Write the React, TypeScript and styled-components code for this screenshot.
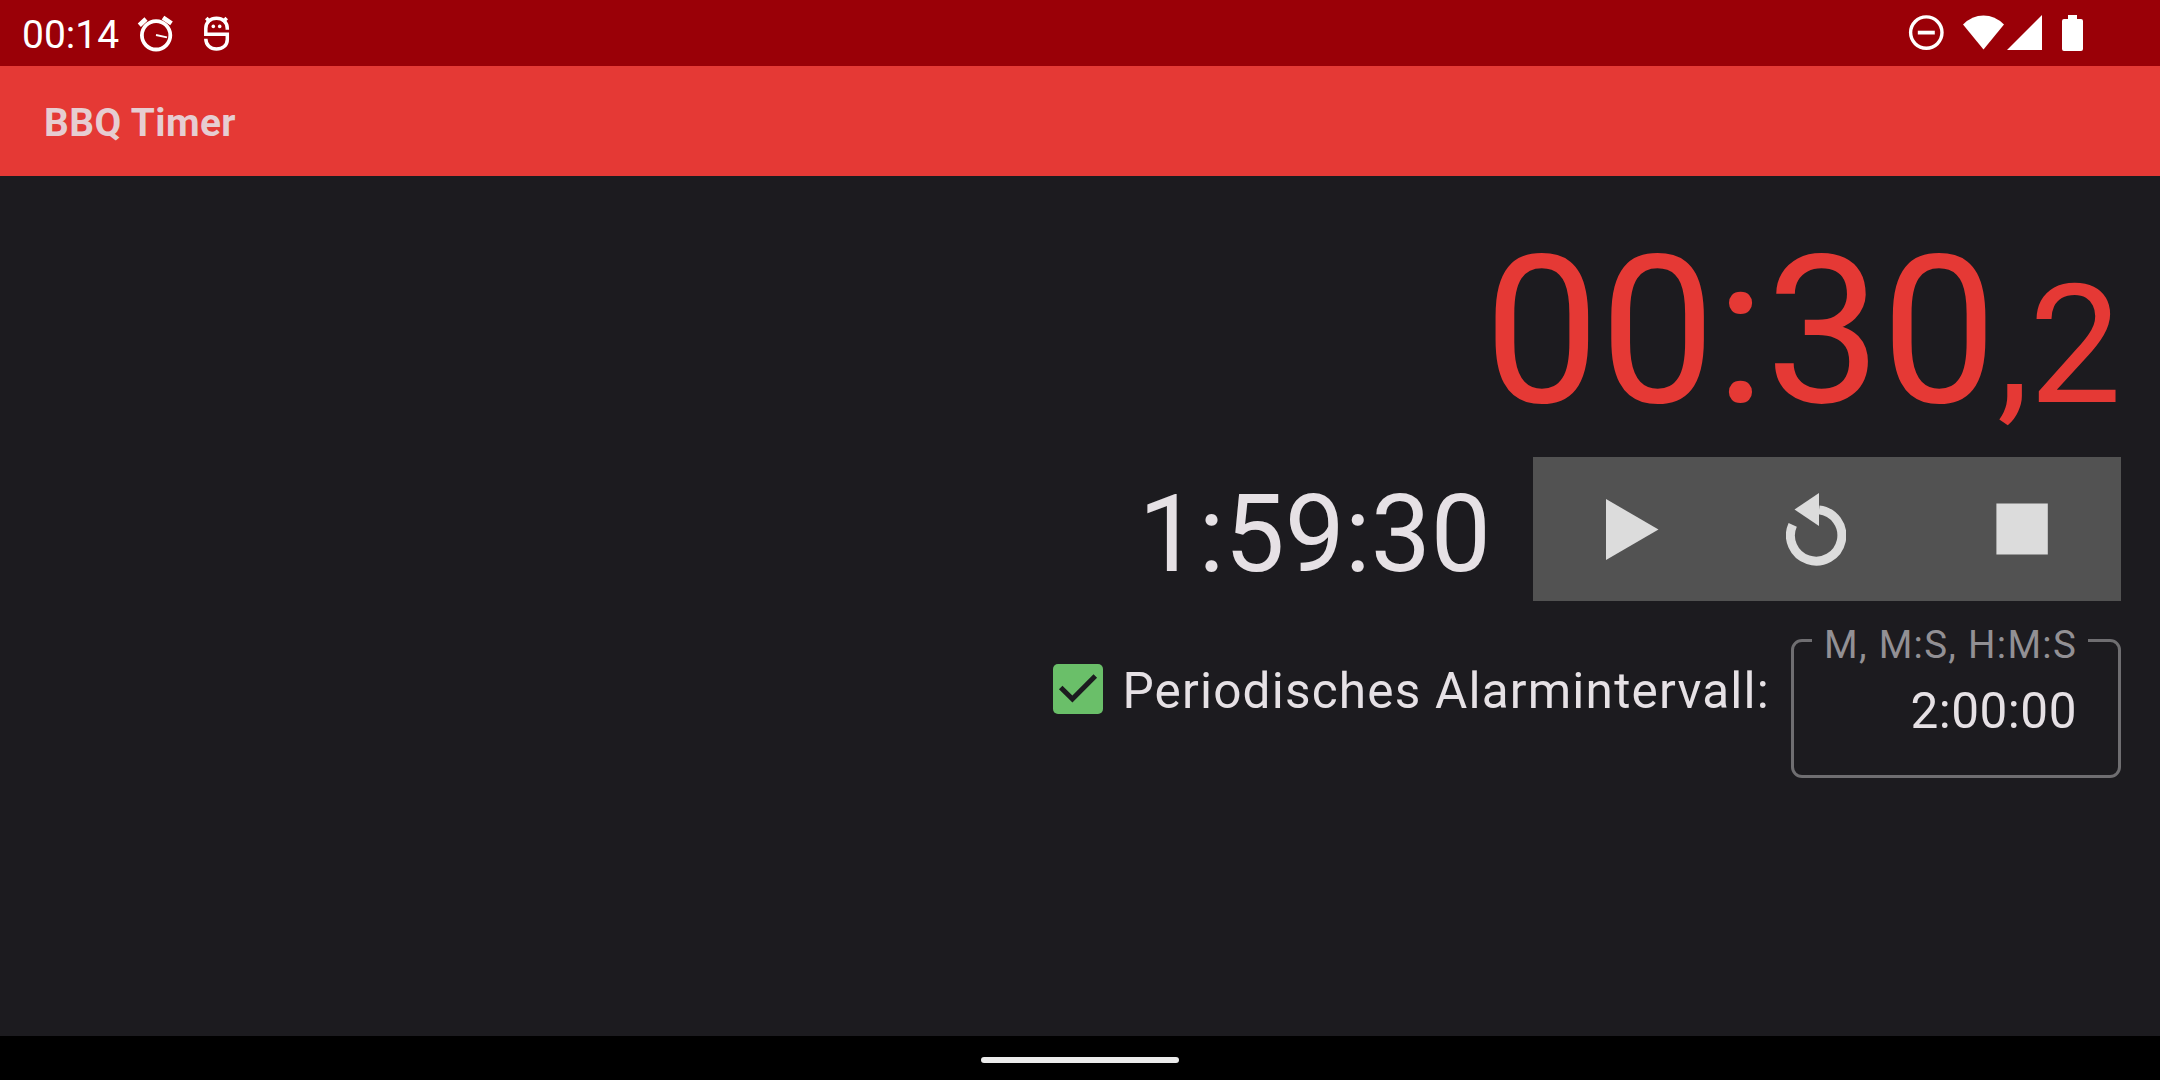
import React from "react";
import styled, { createGlobalStyle } from "styled-components";

const Global = createGlobalStyle`
  body { margin: 0; background: #1c1b1f; }
  *, *::before, *::after { box-sizing: border-box; }
`;
const Screen = styled.div`
  width: 2160px; height: 1080px; display: flex; flex-direction: column;
  background: #1c1b1f; color: #e6e1e5; font-family: Roboto, sans-serif; overflow: hidden;
`;
const StatusBar = styled.header`
  height: 66px; flex: none; display: flex; justify-content: space-between;
  padding: 0 77px 0 22px; background: #9a0007; color: #fff;
`;
const StatusGroup = styled.div<{ $lift?: number }>`
  display: flex; align-items: center; height: 66px; padding-bottom: ${(p) => p.$lift ?? 0}px;
`;
const Clock = styled.span`font-size: 39px; line-height: 66px; width: 115px; padding-top: 3px;`;
const Glyph = styled.svg<{ $w: number; $h: number; $gap?: number }>`
  display: block; flex: none; width: ${(p) => p.$w}px; height: ${(p) => p.$h}px;
  margin-left: ${(p) => p.$gap ?? 0}px;
`;
const AppBar = styled.div`
  height: 110px; flex: none; display: flex; align-items: center; padding: 2px 44px 0;
  background: #e53935; font-size: 38.8px; font-weight: 700; letter-spacing: 0.45px; color: #e6cdd1;
`;
const Main = styled.main`
  flex: 1; display: flex; flex-direction: column; align-items: flex-end; padding: 34px 39px 0 0;
`;
const Countdown = styled.div`
  height: 247px; line-height: 243px; font-size: 206px; color: #e53935; white-space: nowrap;
`;
const Fraction = styled.span`font-size: 0.8em; letter-spacing: -0.5px;`;
const TimerRow = styled.div`display: flex; align-items: center; height: 144px;`;
const Elapsed = styled.div`font-size: 107px; line-height: 144px; margin-right: 42px; padding-top: 12px;`;
const Controls = styled.div`display: flex; width: 588px; height: 144px; background: #525252;`;
const ControlButton = styled.button<{ $w: number }>`
  width: ${(p) => p.$w}px; height: 144px; padding: 0; border: 0; background: none; flex: none;
  display: flex; align-items: center; justify-content: center;
  &:last-child { margin-left: auto; }
`;
const AlarmRow = styled.div`display: flex; align-items: flex-start; padding-top: 17px;`;
const CheckLabel = styled.label`
  display: flex; align-items: center; height: 50px; margin-top: 46px; margin-right: 21px;
  font-size: 49.5px; letter-spacing: 1.2px; white-space: nowrap;
`;
const CheckText = styled.span`margin-left: 19px; padding-top: 3px;`;
const Field = styled.fieldset`
  width: 330px; height: 160px; margin: 0; padding: 0 41px 0 18px; border: 3px solid #6f6e71;
  border-radius: 11px; min-width: 0;
`;
const Legend = styled.legend`
  width: 276px; padding: 0 0 0 12px; height: 45px; line-height: 53px; font-size: 38.5px;
  letter-spacing: 1.3px; color: #929094; white-space: nowrap;
`;
const FieldValue = styled.div`
  padding-top: 19px; font-size: 49.5px; line-height: 58px; letter-spacing: 0.5px; text-align: right;
`;
const NavBar = styled.footer`
  height: 44px; flex: none; display: flex; align-items: center; justify-content: center;
  padding-top: 4px; background: #000;
`;
const Handle = styled.div`width: 198px; height: 6px; border-radius: 3px; background: #ebebeb;`;

export default function App() {
  return (
    <Screen>
      <Global />
      <StatusBar>
        <StatusGroup>
          <Clock>00:14</Clock>
          <Glyph $w={38} $h={38} viewBox="0 0 38 38" fill="none" stroke="#fff">
            <circle cx="19.100" cy="21.300" r="14.200" strokeWidth="3.800" />
            <path d="M2.300 11.200L9 5M26 3.600L34.500 9.400" strokeWidth="4.600" />
            <path d="M19 21l11 2.300" strokeWidth="1.800" />
          </Glyph>
          <Glyph $w={28} $h={38} $gap={28} viewBox="0 0 28 38" fill="none" stroke="#fff" strokeWidth="3.500">
            <path d="M24.300 15.700V14.500C24.300 8 19.500 4.300 13.500 4.300S2.800 8 2.800 14.500V20.300H24.300V25.500C24.300 31.500 19.500 35 13.500 35S2.800 31 2.800 24.700" />
            <path d="M3.300 4l3.600 4M23.700 4l-3.600 4" />
            <circle cx="10.300" cy="12.400" r="1.800" fill="#fff" stroke="none" />
            <circle cx="16.700" cy="12.400" r="1.800" fill="#fff" stroke="none" />
          </Glyph>
        </StatusGroup>
        <StatusGroup $lift={1}>
          <Glyph $w={36} $h={36} viewBox="0 0 36 36" fill="none" stroke="#fff">
            <circle cx="18.300" cy="17.600" r="15.700" strokeWidth="3.400" />
            <path d="M9.800 17.600h17" strokeWidth="3.800" />
          </Glyph>
          <Glyph $w={41} $h={35} $gap={19} viewBox="0 0 41 35" fill="#fff">
            <path d="M0 9.500Q9 .5 20.500 .5T41 9.500L20.500 34.500z" />
          </Glyph>
          <Glyph $w={35} $h={35} $gap={3} viewBox="0 0 35 35" fill="#fff"><path d="M35 0v35H0z" /></Glyph>
          <Glyph $w={21} $h={36} $gap={20} viewBox="0 0 21 36" fill="#fff">
            <path d="M6 0h9v4h4a2 2 0 0 1 2 2v28a2 2 0 0 1-2 2H2a2 2 0 0 1-2-2V6a2 2 0 0 1 2-2h4z" />
          </Glyph>
        </StatusGroup>
      </StatusBar>
      <AppBar>BBQ Timer</AppBar>
      <Main>
        <Countdown>00:30<Fraction>,2</Fraction></Countdown>
        <TimerRow>
          <Elapsed>1:59:30</Elapsed>
          <Controls>
            <ControlButton $w={198} aria-label="Start">
              <Glyph $w={53} $h={61} viewBox="0 0 53 61" fill="#dcdcdc"><path d="M0 0l52.500 30.500L0 61z" /></Glyph>
            </ControlButton>
            <ControlButton $w={170} aria-label="Reset">
              <Glyph $w={60} $h={73} viewBox="0 0 60 73">
                <path d="M33 16.900A25.700 25.700 0 1 1 6.700 31.900" fill="none" stroke="#dcdcdc" strokeWidth="9" />
                <path d="M33 0v33L8.500 16.500z" fill="#dcdcdc" />
              </Glyph>
            </ControlButton>
            <ControlButton $w={198} aria-label="Stop">
              <Glyph $w={52} $h={52} viewBox="0 0 52 52" fill="#dcdcdc"><path d="M.4 .4h51.400v51.200H.4z" /></Glyph>
            </ControlButton>
          </Controls>
        </TimerRow>
        <AlarmRow>
          <CheckLabel>
            <Glyph $w={50} $h={50} viewBox="0 0 50 50">
              <rect width="50" height="50" rx="5" fill="#6abf69" />
              <path d="M7.700 23.500L19.400 35 42.300 12" fill="none" stroke="#1c1b1f" strokeWidth="5" />
            </Glyph>
            <CheckText>Periodisches Alarmintervall:</CheckText>
          </CheckLabel>
          <Field>
            <Legend>M, M:S, H:M:S</Legend>
            <FieldValue>2:00:00</FieldValue>
          </Field>
        </AlarmRow>
      </Main>
      <NavBar><Handle /></NavBar>
    </Screen>
  );
}
